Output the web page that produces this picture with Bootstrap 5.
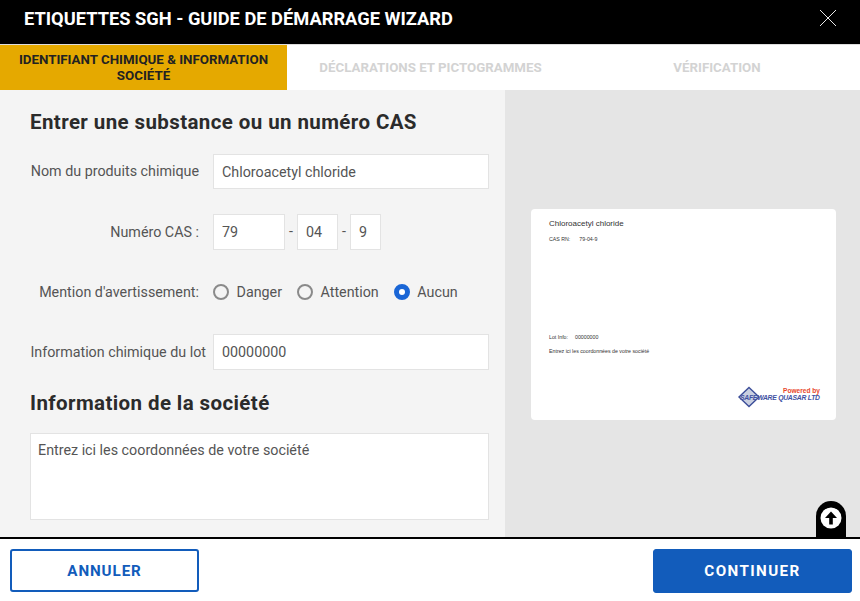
<!DOCTYPE html>
<html lang="fr">
<head>
<meta charset="utf-8">
<title>Etiquettes SGH</title>
<link href="https://cdn.jsdelivr.net/npm/bootstrap@5.3.0/dist/css/bootstrap.min.css" rel="stylesheet">
<style>
html,body{height:601px;overflow:hidden}
body{font-family:Roboto,sans-serif;color:#555;background:#fff;font-size:14.3px}
.wz-shell{height:601px}
.wz-head{height:44px;background:#000;color:#fff;padding:0 24px 8px;border-bottom:0}
.wz-head h1{font:700 18.28px Roboto,sans-serif;margin:0}
.wz-close{width:18px;height:18px;margin-right:-1px;background:none;border:0;padding:0;line-height:0}
.wz-tabs{height:46px;border-top:1px solid #ddd;background:#fff}
.wz-tab{font:700 13.3px/16.5px Roboto,sans-serif;color:#d3d3d3;text-align:center;padding:1px 15px 0}
.wz-tab.on{background:#e5a900;color:#222;width:287px;flex:none}
.wz-t2{width:287px;flex:none}
.wz-body{height:447px;overflow:hidden}
.wz-left{width:505px;flex:none;background:#f4f4f4;padding:19px 16px 0 30px;height:100%}
.wz-right{background:#e5e5e5;height:100%;position:relative}
.wz-h{font:700 20.5px/26px "Roboto",sans-serif;color:#2b2b2b;letter-spacing:.4px;margin:0}
.wz-row{display:flex;align-items:center}
.wz-lab{width:169px;flex:none;text-align:right;margin:0;white-space:nowrap;color:#555;line-height:1}
.wz-ctl{margin-left:14px}
.wz-left .form-control{border-radius:0;border:1px solid #e3e3e3;color:#555;font-size:14.3px;padding:0 8px;box-shadow:none;background:#fff}
.wz-left .form-control:focus{border-color:#e3e3e3}
.r1{margin-top:19px}.r1 .form-control{height:35px;width:276px}
.r2{margin-top:25px;height:36px}.r2 .form-control{height:36px}
.cas1{width:72px}.cas2{width:41px}.cas3{width:31px}
.wz-dash{width:12px;text-align:center;margin:0 0}
.r3{margin-top:24px;height:36px}
.wz-left .form-check{margin:0 15px 0 0;padding:0;display:flex;align-items:center;min-height:0}
.wz-left .form-check-input{float:none;margin:0 7.500px 0 0;width:16px;height:16px;border:2px solid #8a8a8a;background-color:transparent}
.wz-left .form-check-input:checked{background-color:#1a66d6;border-color:#1a66d6}
.wz-left .form-check-label{color:#555;line-height:1}
.r4{margin-top:24px}.r4 .form-control{height:36px;width:276px}
.r4 .wz-lab{width:176px}.r4 .wz-ctl{margin-left:7px}
.wz-h2{margin-top:20px}
.wz-ta{margin-top:17px;height:87px;width:459px;resize:none;padding:8px 7px!important;line-height:1.2}
.wz-label{position:absolute;left:26px;top:119px;width:305px;height:211px;background:#fff;border-radius:4px;font-family:"Liberation Sans",sans-serif;color:#333;overflow:hidden;padding:0 18px}
.wz-label p{margin:0;font-size:5.25px;line-height:1;white-space:nowrap}
.lb-name{font-size:8px!important;padding-top:11px}
.lb-cas{margin-top:9px!important}
.lb-cas span{margin-left:9px}
.lb-lot{margin-top:93px!important}
.lb-lot span{margin-left:7px}
.lb-co{margin-top:8px!important}
.lb-logo{position:absolute;right:15px;bottom:12px;display:block}
.wz-top{position:absolute;right:14px;bottom:0;width:30px;height:36px;background:#000;border-radius:15px 15px 0 0;display:flex;justify-content:center;padding-top:5px}
.wz-top svg{display:block}
.wz-foot{height:64px;border-top:2px solid #000;padding:10px 8px 0 10px;background:#fff;justify-content:space-between;align-items:flex-start}
.wz-btn{font:700 15.2px Roboto,sans-serif;letter-spacing:.9px;border-radius:3px;height:43px;display:flex;align-items:center;justify-content:center;padding:0}
.wz-btn.no{width:189px;border:2px solid #125cbb;color:#125cbb;background:#fff}
.wz-btn.yes{width:199px;border:1px solid #125cbb;background:#125cbb;color:#fff;height:44px;letter-spacing:1.4px}
</style>
</head>
<body>
<div class="wz-shell d-flex flex-column">
  <header class="wz-head d-flex align-items-center justify-content-between">
    <h1>ETIQUETTES SGH - GUIDE DE DÉMARRAGE WIZARD</h1>
    <button class="wz-close" type="button" aria-label="Fermer">
      <svg width="18" height="18" viewBox="0 0 18 18"><path d="M1 1L17 17M17 1L1 17" stroke="#e8e8e8" stroke-width="1" fill="none"/></svg>
    </button>
  </header>
  <nav class="wz-tabs d-flex">
    <div class="wz-tab on d-flex align-items-center justify-content-center">IDENTIFIANT CHIMIQUE &amp; INFORMATION SOCIÉTÉ</div>
    <div class="wz-tab wz-t2 d-flex align-items-center justify-content-center">DÉCLARATIONS ET PICTOGRAMMES</div>
    <div class="wz-tab flex-grow-1 d-flex align-items-center justify-content-center">VÉRIFICATION</div>
  </nav>
  <main class="wz-body d-flex">
    <section class="wz-left">
      <h2 class="wz-h">Entrer une substance ou un numéro CAS</h2>
      <div class="wz-row r1">
        <label class="wz-lab">Nom du produits chimique</label>
        <input class="form-control wz-ctl" value="Chloroacetyl chloride">
      </div>
      <div class="wz-row r2">
        <label class="wz-lab">Numéro CAS :</label>
        <input class="form-control wz-ctl cas1" value="79">
        <span class="wz-dash">-</span>
        <input class="form-control cas2" value="04">
        <span class="wz-dash">-</span>
        <input class="form-control cas3" value="9">
      </div>
      <div class="wz-row r3">
        <label class="wz-lab">Mention d'avertissement:</label>
        <div class="d-flex wz-ctl">
          <div class="form-check"><input class="form-check-input" type="radio" name="m" id="m1"><label class="form-check-label" for="m1">Danger</label></div>
          <div class="form-check"><input class="form-check-input" type="radio" name="m" id="m2"><label class="form-check-label" for="m2">Attention</label></div>
          <div class="form-check"><input class="form-check-input" type="radio" name="m" id="m3" checked><label class="form-check-label" for="m3">Aucun</label></div>
        </div>
      </div>
      <div class="wz-row r4">
        <label class="wz-lab">Information chimique du lot</label>
        <input class="form-control wz-ctl" value="00000000">
      </div>
      <h2 class="wz-h wz-h2">Information de la société</h2>
      <textarea class="form-control wz-ta">Entrez ici les coordonnées de votre société</textarea>
    </section>
    <section class="wz-right flex-grow-1">
      <div class="wz-label">
        <p class="lb-name">Chloroacetyl chloride</p>
        <p class="lb-cas">CAS RN:<span>79-04-9</span></p>
        <p class="lb-lot">Lot Info:<span>00000000</span></p>
        <p class="lb-co">Entrez ici les coordonnées de votre société</p>
        <svg class="lb-logo" width="84" height="22" viewBox="0 0 84 22">
          <path d="M12 1.500L22 11L12 20.500L2 11Z" fill="#c9cfe0" stroke="#3d4f9a" stroke-width="1.400"/>
          <text x="83" y="7" text-anchor="end" font-family="Liberation Sans" font-weight="700" font-size="6.600" fill="#e8472a">Powered by</text>
          <text x="83" y="14.300" text-anchor="end" font-family="Liberation Sans" font-weight="700" font-style="italic" font-size="6.800" fill="#3f51a3" textLength="80">SAFEWARE QUASAR LTD</text>
        </svg>
      </div>
      <a class="wz-top" href="#" aria-label="Haut de page">
        <svg width="24" height="24" viewBox="0 0 24 24"><circle cx="12" cy="12" r="10.500" fill="#fff"/><path d="M12 5.500L18 12H13.800V18.500H10.200V12H6Z" fill="#000"/></svg>
      </a>
    </section>
  </main>
  <footer class="wz-foot d-flex">
    <button class="btn wz-btn no" type="button">ANNULER</button>
    <button class="btn wz-btn yes" type="button">CONTINUER</button>
  </footer>
</div>
<script src="https://cdn.jsdelivr.net/npm/bootstrap@5.3.0/dist/js/bootstrap.bundle.min.js"></script>
</body>
</html>
